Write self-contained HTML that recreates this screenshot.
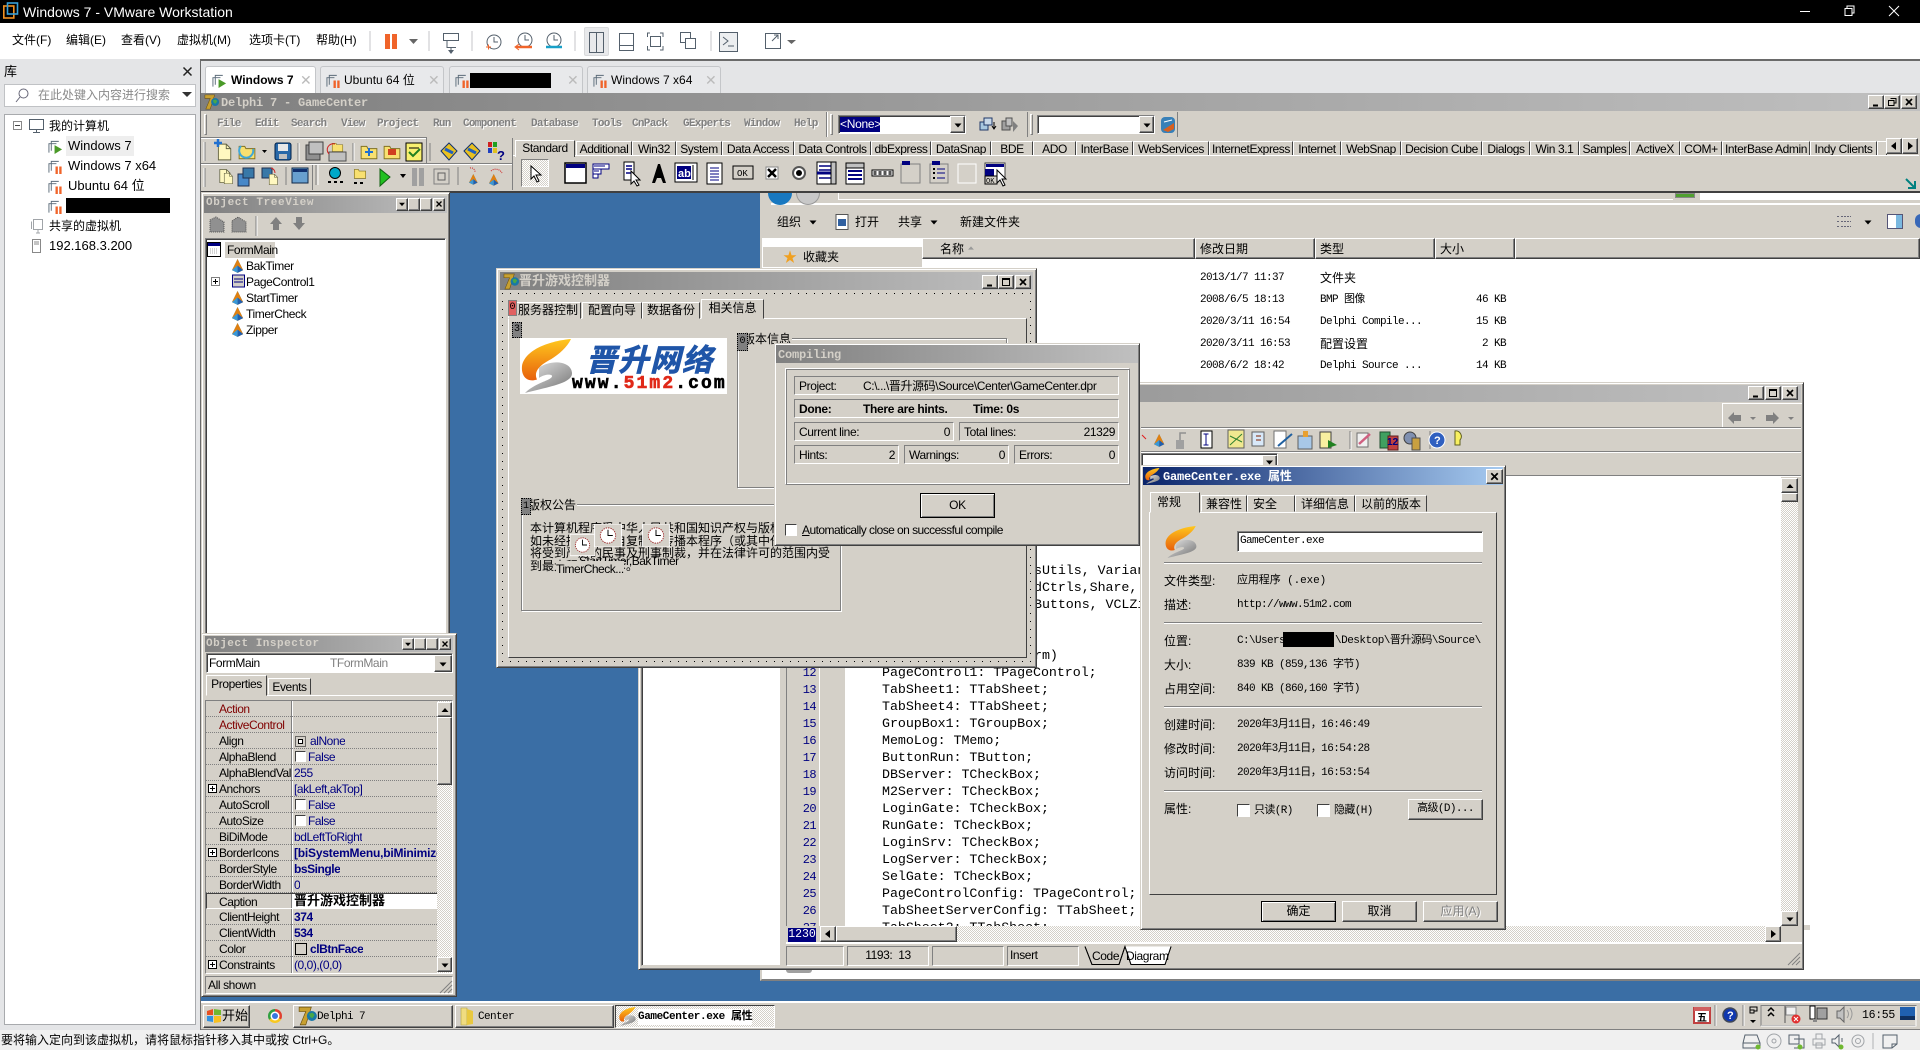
<!DOCTYPE html>
<html lang="zh"><head><meta charset="utf-8"><title>Windows 7 - VMware Workstation</title>
<style>
html,body{margin:0;padding:0}
body{width:1920px;height:1050px;position:relative;overflow:hidden;background:#e4e5e7;font:12px "Liberation Sans","Noto Sans CJK SC",sans-serif;color:#000}
.a{position:absolute;box-sizing:border-box}
.t{position:absolute;white-space:nowrap;line-height:16px;height:16px}
.s{letter-spacing:-.4px}
.m{font-family:"Liberation Mono","Noto Sans CJK SC",monospace;font-size:11px;letter-spacing:-.6px}
.r{position:absolute;box-sizing:border-box;background:#d4d0c8;border:1px solid;border-color:#fff #404040 #404040 #fff;box-shadow:inset -1px -1px #808080}
.k{position:absolute;box-sizing:border-box;background:#fff;border:1px solid;border-color:#808080 #fff #fff #808080;box-shadow:inset 1px 1px #404040}
.l{position:absolute;box-sizing:border-box;background:#d4d0c8;border:1px solid;border-color:#808080 #fff #fff #808080;line-height:16px;white-space:nowrap}
.w{position:absolute;box-sizing:border-box;background:#d4d0c8;border:1px solid;border-color:#d4d0c8 #404040 #404040 #d4d0c8;box-shadow:inset 1px 1px #fff,inset -1px -1px #808080}
.g{position:absolute;box-sizing:border-box;background:linear-gradient(90deg,#808080,#c0c0c0)}
.h{position:absolute;height:2px;background:linear-gradient(#808080 50%,#fff 50%)}
.d{position:absolute;box-sizing:border-box;background:repeating-conic-gradient(#fff 0 25%,#d4d0c8 0 50%) 0 0/2px 2px}
.tb{position:absolute;box-sizing:border-box;background:#d4d0c8;border:1px solid;border-color:#fff #404040 #d4d0c8 #fff;text-align:center;white-space:nowrap;overflow:hidden;line-height:15px;letter-spacing:-.4px}
.mn{position:absolute;white-space:nowrap;line-height:16px;font:bold 11px/16px "Liberation Mono",monospace;letter-spacing:-.7px;color:#808080;text-shadow:1px 1px #fff;top:116px}
.ttl{position:absolute;white-space:nowrap;font:bold 12px/16px "Liberation Mono","Noto Sans CJK SC",monospace;letter-spacing:-.2px;color:#d4d0c8}
.vt{position:absolute;height:27px;top:66px;border:1px solid #c4c6c9;border-bottom:0;border-radius:3px 3px 0 0;background:#e8e9eb;box-sizing:border-box;font-size:12px;line-height:26px;white-space:nowrap}
.cd{position:absolute;left:882px;font:13.33px/17px "Liberation Mono",monospace;white-space:pre;letter-spacing:-.05px;height:17px;margin-top:2px}
.ln{position:absolute;left:790px;width:26px;text-align:right;font:12px/17px "Liberation Mono",monospace;letter-spacing:-.6px;color:#000080;margin-top:2px}
.ir{position:absolute;left:206px;width:231px;height:16px;border-bottom:1px dotted #808080;box-sizing:border-box}
.ir>b,.ir>i{position:absolute;font-style:normal;font-weight:normal;top:1px;line-height:15px;white-space:nowrap;letter-spacing:-.45px}
.ir>b{left:13px}.ir>i{left:88px;color:#000080;max-width:143px;overflow:hidden}
.cb{position:absolute;box-sizing:border-box;width:11px;height:11px;background:#fff;border:1px solid;border-color:#404040 #fff #fff #404040}
svg{position:absolute;overflow:visible}
.lb{position:absolute;left:1164px;line-height:16px;white-space:nowrap;font-size:12px;margin-top:1px}
.vl{position:absolute;left:1237px;line-height:16px;white-space:nowrap;margin-top:1px}
</style></head><body>
<svg width="0" height="0" style="position:absolute"><defs>
<linearGradient id="og" x1="0" y1="0" x2="0" y2="1"><stop offset="0" stop-color="#ffc81e"/><stop offset="1" stop-color="#e8600c"/></linearGradient>
<linearGradient id="gg" x1="0" y1="0" x2="1" y2="1"><stop offset="0" stop-color="#e8e8e8"/><stop offset="1" stop-color="#707070"/></linearGradient>
<symbol id="sl" viewBox="0 0 52 64" preserveAspectRatio="none"><path d="M50 0C30 2 4 12 1 32C0 44 6 52 16 48C12 38 20 30 30 24C38 18 46 10 50 0Z" fill="url(#og)"/><path d="M18 34C30 24 50 26 51 40C52 52 30 56 4 64C12 54 26 50 30 46C34 42 26 40 18 46Z" fill="url(#gg)"/></symbol>
<symbol id="d7" viewBox="0 0 18 18"><path d="M1 1H12L7 17H2L7 5H1Z" fill="#c8a030" stroke="#6a5010" stroke-width=".6"/><circle cx="12.5" cy="9" r="4.5" fill="#1878a8"/><path d="M10 7l3-1 2 2-2 3-2-1z" fill="#48a848"/></symbol>
<symbol id="vm" viewBox="0 0 16 16"><path d="M3.5 12.500V2.500H11.500M1 14.500V5H9" fill="none" stroke="#5a6a78"/><rect x="8" y="8" width="2.500" height="8" fill="#f0642a"/><rect x="12" y="8" width="2.500" height="8" fill="#f0642a"/></symbol>
<symbol id="vr" viewBox="0 0 16 16"><path d="M3.500 12.500V2.500H11.500M1 14.500V5H9" fill="none" stroke="#5a6a78"/><path d="M7 6.500L15 11L7 16Z" fill="#4a9a28"/></symbol>
<symbol id="ck" viewBox="0 0 28 24"><rect width="28" height="24" fill="#d4d0c8" stroke="#fff"/><circle cx="14" cy="12" r="8" fill="#fff" stroke="#a03030" stroke-dasharray="1.500 1"/><path d="M14 6V12H19" fill="none" stroke="#000"/></symbol>
<symbol id="cu" viewBox="0 0 14 16"><path d="M6 1L12 13H0Z" fill="#3898d8" transform="rotate(0)"/><path d="M6 1L12 13L6 16L0 13Z" fill="#e08010"/><path d="M6 16L12 13L6 8Z" fill="#2060b0"/><path d="M0 13L6 16V8Z" fill="#3898d8"/></symbol>
<symbol id="xx" viewBox="0 0 12 12"><path d="M3 3L9 9M9 3L3 9" stroke="#000" stroke-width="1.600"/></symbol>
<symbol id="mi" viewBox="0 0 12 12"><path d="M3 9.500H8" stroke="#000" stroke-width="2"/></symbol>
<symbol id="mx" viewBox="0 0 12 12"><path d="M2.500 2.500H9.500V9.500H2.500Z M2.500 3.500H9.500" fill="none" stroke="#000"/></symbol>
<symbol id="rs" viewBox="0 0 12 12"><path d="M4.500 2.500H10V7H8M2.500 4.500H8V9.500H2.500Z" fill="none" stroke="#000"/></symbol>
<symbol id="dn" viewBox="0 0 12 12"><path d="M2.500 4.500H9.500L6 8.500Z"/></symbol>
<symbol id="up" viewBox="0 0 12 12"><path d="M2.500 8H9.500L6 4Z"/></symbol>
<symbol id="fo" viewBox="0 0 16 16"><path d="M1 3H6L7 5H15V14H1Z" fill="#f8e070" stroke="#807020" stroke-width=".8"/></symbol>
<symbol id="pg" viewBox="0 0 16 16"><path d="M3 1H10L14 5V15H3Z" fill="#fff8c0" stroke="#606040" stroke-width=".8"/><path d="M10 1V5H14" fill="none" stroke="#606040" stroke-width=".8"/></symbol>
<pattern id="dots" width="8" height="8" patternUnits="userSpaceOnUse"><rect x="3" y="3" width="1" height="1" fill="#000"/></pattern>
</defs></svg>

<!-- VMware title -->
<div class="a" style="left:0;top:0;width:1920px;height:23px;background:#000"></div>
<svg style="left:3px;top:2px" width="16" height="18" viewBox="0 0 16 18"><rect x=".8" y="4" width="10" height="12" fill="none" stroke="#f09020" stroke-width="1.600"/><rect x="4.500" y="1" width="10" height="11" fill="none" stroke="#38a0d8" stroke-width="1.600"/></svg>
<div class="t" style="left:23px;top:4px;color:#fff;font-size:14px">Windows 7 - VMware Workstation</div>
<svg style="left:1800px;top:5px" width="110" height="12" viewBox="0 0 110 12" fill="none" stroke="#fff"><path d="M0 6.500H10"/><path d="M45 3.500H52V10.500H45ZM47 3V1H54V8H52"/><path d="M89 1L99 11M99 1L89 11"/></svg>

<!-- VMware menu -->
<div class="a" style="left:0;top:23px;width:1920px;height:36px;background:#fff"></div>
<div class="t" style="left:12px;top:32px;font-size:12px">文件(F)</div>
<div class="t" style="left:66px;top:32px;font-size:12px">编辑(E)</div>
<div class="t" style="left:121px;top:32px;font-size:12px">查看(V)</div>
<div class="t" style="left:177px;top:32px;font-size:12px">虚拟机(M)</div>
<div class="t" style="left:249px;top:32px;font-size:12px">选项卡(T)</div>
<div class="t" style="left:316px;top:32px;font-size:12px">帮助(H)</div>
<div class="a" style="left:584px;top:27px;width:25px;height:29px;background:#e8e9eb;border:1px solid #d8d9db;border-radius:2px"></div>
<svg style="left:0;top:23px" width="860" height="36" viewBox="0 0 860 36" fill="none" stroke="#54606c">
<path d="M370 8V28M429 8V28M472 8V28M575 8V28M711 8V28" stroke="#c4c6c9"/>
<rect x="385" y="11" width="5" height="15" fill="#f0642a" stroke="none"/><rect x="392" y="11" width="5" height="15" fill="#f0642a" stroke="none"/>
<path d="M409 16H418L413.500 21Z" fill="#666" stroke="none"/>
<path d="M443.500 10.500H458.500V17.500H443.500ZM447 17.500V24.500H456M451 24V30" /><path d="M448 27L451 31L454 27" fill="#54606c" stroke="none"/>
<circle cx="494" cy="19" r="7"/><path d="M494 14V19H498"/><path d="M486 24H491M488.500 21.500V26.500" stroke="#f0642a"/>
<circle cx="525" cy="17" r="7"/><path d="M525 12V17H529"/><path d="M516 24H532" stroke="#f0642a" stroke-width="2.500"/><path d="M519 21L515 24L519 27" stroke="#f0642a"/>
<circle cx="554" cy="17" r="7"/><path d="M554 12V17H558"/><path d="M546 24H562" stroke="#18a0c8" stroke-width="2.500"/>
<rect x="589.500" y="9.500" width="14" height="20"/><path d="M596.500 10V29"/>
<rect x="619.500" y="10.500" width="14" height="17"/><path d="M620 22.500H633"/>
<path d="M650 10H647.500V14M660 10H663V14M650 27H647.500V23M660 27H663V23"/><rect x="650.500" y="13.500" width="10" height="10"/>
<rect x="680.500" y="9.500" width="10" height="10"/><rect x="685.500" y="15.500" width="10" height="10" fill="#fff"/>
<rect x="719.500" y="9.500" width="18" height="19" fill="#eceef0"/><path d="M723 14L728 18L723 22M728 23H734"/>
<path d="M765.500 10.500H780.500V25.500H765.500Z"/><path d="M772 18L778 12M778 16V12H774"/>
<path d="M787 17H796L791.500 21Z" fill="#666" stroke="none"/>
</svg>

<!-- library -->
<div class="t" style="left:4px;top:64px;font-size:13px">库</div>
<svg style="left:182px;top:66px" width="11" height="11" viewBox="0 0 11 11"><path d="M1.500 1.500L9.500 9.500M9.500 1.500L1.500 9.500" stroke="#222" stroke-width="1.500"/></svg>
<div class="a" style="left:4px;top:84px;width:192px;height:23px;background:#fff;border:1px solid #c0c2c5"></div>
<svg style="left:15px;top:88px" width="14" height="15" viewBox="0 0 14 15" fill="none" stroke="#667"><circle cx="8.500" cy="5.500" r="4.500"/><path d="M5 9L1 14"/></svg>
<div class="t" style="left:38px;top:87px;color:#8a8a8a">在此处键入内容进行搜索</div>
<svg style="left:182px;top:91px" width="12" height="9" viewBox="0 0 12 9"><path d="M0 1H10L5 6Z" fill="#333"/></svg>
<div class="a" style="left:4px;top:114px;width:192px;height:911px;background:#fff;border:1px solid #a8aaad"></div>
<div class="a" style="left:13px;top:121px;width:9px;height:9px;border:1px solid #888"></div><div class="a" style="left:15px;top:125px;width:5px;height:1px;background:#444"></div>
<svg style="left:29px;top:119px" width="15" height="14" viewBox="0 0 15 14" fill="none" stroke="#54606c"><rect x=".5" y=".5" width="14" height="10"/><path d="M4 13.500H11M7.500 11V13"/></svg>
<div class="t" style="left:49px;top:118px;font-size:12px">我的计算机</div>
<div class="a" style="left:66px;top:136px;width:68px;height:20px;background:#eeeeee"></div>
<svg style="left:48px;top:139px" width="15" height="15"><use href="#vr"/></svg>
<div class="t" style="left:68px;top:138px;font-size:13px">Windows 7</div>
<svg style="left:48px;top:159px" width="15" height="15"><use href="#vm"/></svg>
<div class="t" style="left:68px;top:158px;font-size:13px">Windows 7 x64</div>
<svg style="left:48px;top:179px" width="15" height="15"><use href="#vm"/></svg>
<div class="t" style="left:68px;top:178px;font-size:13px">Ubuntu 64 位</div>
<svg style="left:48px;top:199px" width="15" height="15"><use href="#vm"/></svg>
<div class="a" style="left:66px;top:198px;width:104px;height:15px;background:#000"></div>
<svg style="left:31px;top:219px" width="13" height="15" viewBox="0 0 13 15" fill="none" stroke="#a0a4a8"><rect x="2.500" y=".5" width="9" height="10"/><path d="M.5 2.500V10M5 14H9M7 11V14"/></svg>
<div class="t" style="left:49px;top:218px;font-size:12px">共享的虚拟机</div>
<svg style="left:32px;top:239px" width="10" height="15" viewBox="0 0 10 15" fill="none" stroke="#888"><rect x=".5" y=".5" width="8" height="13"/><path d="M2 3H7M2 5H7"/></svg>
<div class="t" style="left:49px;top:238px;font-size:13px">192.168.3.200</div>

<!-- VM tabs -->
<div class="a" style="left:200px;top:59px;width:1720px;height:2px;background:#6a6a6a"></div>
<div class="a" style="left:200px;top:59px;width:1px;height:971px;background:#6a6a6a"></div>
<div class="vt" style="left:205px;width:111px;background:#fff"><svg style="left:6px;top:6px" width="15" height="15"><use href="#vr"/></svg><b style="position:absolute;left:25px">Windows 7</b><span style="position:absolute;left:94px;color:#bbb;font-size:14px">✕</span></div>
<div class="vt" style="left:320px;width:124px"><svg style="left:5px;top:6px" width="15" height="15"><use href="#vm"/></svg><span style="position:absolute;left:23px">Ubuntu 64 位</span><span style="position:absolute;left:107px;color:#bbb;font-size:14px">✕</span></div>
<div class="vt" style="left:449px;width:134px"><svg style="left:5px;top:6px" width="15" height="15"><use href="#vm"/></svg><div class="a" style="left:20px;top:6px;width:81px;height:15px;background:#000"></div><span style="position:absolute;left:117px;color:#bbb;font-size:14px">✕</span></div>
<div class="vt" style="left:587px;width:134px"><svg style="left:5px;top:6px" width="15" height="15"><use href="#vm"/></svg><span style="position:absolute;left:23px">Windows 7 x64</span><span style="position:absolute;left:117px;color:#bbb;font-size:14px">✕</span></div>

<!-- Guest desktop -->
<div class="a" style="left:201px;top:93px;width:1719px;height:937px;background:#3a6ea5"></div>

<!-- Explorer behind -->
<div class="a" style="left:760px;top:193px;width:1160px;height:788px;background:#fff;border-left:2px solid #d4d0c8;border-bottom:2px solid #808080"></div>
<div class="a" style="left:762px;top:193px;width:1158px;height:45px;background:#d4d0c8"></div>
<div class="a" style="left:771px;top:193px;width:1149px;height:12px;background:#d4d0c8;border-bottom:2px solid #fff"></div>
<div class="a" style="left:838px;top:193px;width:835px;height:7px;border-bottom:1px solid #fff;border-left:1px solid #fff"></div>
<div class="a" style="left:1700px;top:193px;width:220px;height:7px;background:#fff"></div>
<div class="a" style="left:1675px;top:193px;width:20px;height:5px;background:#50a030;border:1px solid #888"></div>
<div class="a" style="left:768px;top:193px;width:24px;height:12px;background:#1878c0;border-radius:0 0 12px 12px"></div>
<div class="a" style="left:796px;top:193px;width:24px;height:12px;background:#c8c8c8;border-radius:0 0 12px 12px;border:1px solid #999;border-top:0"></div>
<div class="t" style="left:777px;top:214px">组织</div>
<svg style="left:807px;top:216px" width="12" height="12"><use href="#dn"/></svg>
<svg style="left:835px;top:214px" width="15" height="16" viewBox="0 0 15 16"><rect x="1" y=".5" width="12" height="15" fill="#fff" stroke="#555"/><rect x="3" y="5" width="8" height="7" fill="#3060a0"/></svg>
<div class="t" style="left:855px;top:214px">打开</div>
<div class="t" style="left:898px;top:214px">共享</div>
<svg style="left:928px;top:216px" width="12" height="12"><use href="#dn"/></svg>
<div class="t" style="left:960px;top:214px">新建文件夹</div>
<svg style="left:1836px;top:215px" width="16" height="13" viewBox="0 0 16 13" fill="none" stroke="#667"><path d="M1 1.500H3M1 6.500H3M1 11.500H3M5 1.500H15M5 6.500H15M5 11.500H15" stroke-dasharray="2 1"/></svg>
<svg style="left:1862px;top:216px" width="12" height="12"><use href="#dn"/></svg>
<svg style="left:1887px;top:214px" width="16" height="15" viewBox="0 0 16 15"><rect x=".5" y=".5" width="15" height="14" fill="#fff" stroke="#557"/><rect x="9" y="1" width="6" height="13" fill="#7ab8e0"/></svg>
<div class="a" style="left:1915px;top:214px;width:12px;height:14px;border-radius:7px;background:#3868b8"></div>
<div class="a" style="left:763px;top:247px;width:159px;height:20px;background:#d4d0c8"></div>
<div class="t" style="left:783px;top:249px;font-size:14px;color:#f0a020;line-height:16px">★</div>
<div class="t" style="left:803px;top:249px">收藏夹</div>
<div class="r" style="left:922px;top:238px;width:273px;height:21px;box-shadow:inset -1px -1px #808080"></div>
<div class="t" style="left:940px;top:241px">名称</div><svg style="left:966px;top:243px" width="10" height="10"><use href="#up" fill="#999"/></svg>
<div class="r" style="left:1195px;top:238px;width:120px;height:21px"></div><div class="t" style="left:1200px;top:241px">修改日期</div>
<div class="r" style="left:1315px;top:238px;width:120px;height:21px"></div><div class="t" style="left:1320px;top:241px">类型</div>
<div class="r" style="left:1435px;top:238px;width:80px;height:21px"></div><div class="t" style="left:1440px;top:241px">大小</div>
<div class="r" style="left:1515px;top:238px;width:405px;height:21px"></div>
<div class="t m" style="left:1200px;top:270px">2013/1/7 11:37</div><div class="t" style="left:1320px;top:270px">文件夹</div>
<div class="t m" style="left:1200px;top:292px">2008/6/5 18:13</div><div class="t m" style="left:1320px;top:292px">BMP 图像</div><div class="t m" style="left:1476px;top:292px">46 KB</div>
<div class="t m" style="left:1200px;top:314px">2020/3/11 16:54</div><div class="t m" style="left:1320px;top:314px">Delphi Compile...</div><div class="t m" style="left:1476px;top:314px">15 KB</div>
<div class="t m" style="left:1200px;top:336px">2020/3/11 16:53</div><div class="t" style="left:1320px;top:336px">配置设置</div><div class="t m" style="left:1482px;top:336px">2 KB</div>
<div class="t m" style="left:1200px;top:358px">2008/6/2 18:42</div><div class="t m" style="left:1320px;top:358px">Delphi Source ...</div><div class="t m" style="left:1476px;top:358px">14 KB</div>
<div class="a" style="left:786px;top:970px;width:26px;height:3px;background:#a0a0a0;border-radius:0 0 6px 6px"></div>
<div class="a" style="left:1804px;top:925px;width:6px;height:5px;background:#d4d0c8"></div>

<!-- Editor window -->
<div class="w" style="left:638px;top:382px;width:1166px;height:588px"></div>
<div class="g" style="left:641px;top:385px;width:1160px;height:17px"></div>
<div class="r" style="left:1748px;top:386px;width:16px;height:14px"><svg width="14" height="12"><use href="#mi"/></svg></div>
<div class="r" style="left:1765px;top:386px;width:16px;height:14px"><svg width="14" height="12"><use href="#mx"/></svg></div>
<div class="r" style="left:1782px;top:386px;width:16px;height:14px"><svg width="14" height="12"><use href="#xx"/></svg></div>
<div class="a" style="left:1722px;top:403px;width:80px;height:24px;border-top:1px solid #fff;border-left:1px solid #fff"></div>
<svg style="left:1728px;top:410px" width="70" height="16" viewBox="0 0 70 16"><path d="M0 8L6 2V5H13V11H6V14Z" fill="#808080"/><path d="M22 7H28L25 10Z" fill="#808080"/><path d="M51 8L45 2V5H38V11H45V14Z" fill="#808080" transform="translate(0 0)"/><path d="M60 7H66L63 10Z" fill="#808080"/></svg>
<div class="h" style="left:1141px;top:427px;width:660px"></div>
<div class="h" style="left:1141px;top:451px;width:660px"></div>
<svg style="left:1140px;top:428px" width="320" height="24" viewBox="0 0 320 24">
<use href="#cu" x="14" y="4" width="12" height="16"/>
<path d="M2 7L6 11" stroke="#e02020"/>
<rect x="36" y="12" width="8" height="9" fill="#a0a0a0"/><path d="M40 12V5H46" fill="none" stroke="#909090" stroke-width="1.500"/>
<path d="M61 3H72V20H61Z" fill="#fff" stroke="#000"/><path d="M66 6V17M63.500 6H68.500M63.500 17H68.500" stroke="#000080"/>
<path d="M88 2H104V20H88Z" fill="#f0e890" stroke="#606060"/><path d="M90 8L102 14M102 6L90 17" stroke="#308030"/>
<path d="M112 4H124V18H112Z" fill="#d8e8f8" stroke="#606060"/><path d="M116 8H121M116 12H121" stroke="#802000"/>
<path d="M134 3H146V20H134Z" fill="#fff" stroke="#707070"/><path d="M138 18L152 6" stroke="#2060a0" stroke-width="2"/>
<rect x="158" y="8" width="14" height="13" fill="#a8c8e8" stroke="#606060"/><rect x="163" y="3" width="5" height="6" fill="#e8a030"/>
<path d="M180 4H191V20H180Z" fill="#f8f0a0" stroke="#404040"/><path d="M188 12L197 17L188 20Z" fill="#208020"/>
<path d="M210 3V21" stroke="#808080"/><path d="M211 4V22" stroke="#fff"/>
<path d="M217 5H228V19H217Z" fill="#f0f0f0" stroke="#707070"/><path d="M219 16L230 6" stroke="#d06080" stroke-width="2.500"/>
<path d="M240 4H250V20H240Z" fill="#40a060" stroke="#205030"/><path d="M248 8H258V22H248Z" fill="#c04040" stroke="#602020"/><text x="247" y="17" font-size="10" font-weight="bold" fill="#000080" font-family="Liberation Sans">12</text>
<circle cx="270" cy="10" r="6" fill="#8090b0" stroke="#404040"/><path d="M272 10H280V22H272Z" fill="#c8a040" stroke="#505050"/>
<path d="M290 3V21" stroke="#808080"/>
<circle cx="297" cy="12" r="8" fill="#3060c0" stroke="#fff"/><text x="294" y="16" font-size="11" font-weight="bold" fill="#fff" font-family="Liberation Sans">?</text>
<path d="M315 3a5.500 5.500 0 0 1 5 9v5h-5z" fill="#f8f060" stroke="#606020"/>
</svg>
<div class="k" style="left:1141px;top:453px;width:137px;height:20px"></div><div class="r" style="left:1262px;top:455px;width:15px;height:16px"><svg width="13" height="12"><use href="#dn"/></svg></div>
<div class="h" style="left:1141px;top:475px;width:660px"></div>
<div class="a" style="left:1141px;top:476px;width:640px;height:450px;background:#fff"></div>
<div class="a" style="left:847px;top:476px;width:933px;height:450px;background:#fff"></div>
<div class="a" style="left:641px;top:405px;width:140px;height:561px;background:#fff;border:1px solid;border-color:#808080 #d4d0c8 #d4d0c8 #808080;box-shadow:inset 1px 1px #404040"></div>
<div class="a" style="left:786px;top:476px;width:33px;height:469px;background:#d4d0c8;border-left:1px solid #808080"></div>
<div class="a" style="left:819px;top:476px;width:28px;height:469px;background:#d4d0c8;border-left:1px solid #fff;border-right:2px solid #fff"></div>
<div class="cd" style="left:1034px;top:561px">sUtils, Variants, Classes</div>
<div class="cd" style="left:1034px;top:578px">dCtrls,Share, ExtCtrls</div>
<div class="cd" style="left:1034px;top:595px">Buttons, VCLZip, </div>
<div class="cd" style="left:1034px;top:646px">rm)</div>
<div class="cd" style="top:663px">PageControl1: TPageControl;</div><div class="ln" style="top:663px">12</div>
<div class="cd" style="top:680px">TabSheet1: TTabSheet;</div><div class="ln" style="top:680px">13</div>
<div class="cd" style="top:697px">TabSheet4: TTabSheet;</div><div class="ln" style="top:697px">14</div>
<div class="cd" style="top:714px">GroupBox1: TGroupBox;</div><div class="ln" style="top:714px">15</div>
<div class="cd" style="top:731px">MemoLog: TMemo;</div><div class="ln" style="top:731px">16</div>
<div class="cd" style="top:748px">ButtonRun: TButton;</div><div class="ln" style="top:748px">17</div>
<div class="cd" style="top:765px">DBServer: TCheckBox;</div><div class="ln" style="top:765px">18</div>
<div class="cd" style="top:782px">M2Server: TCheckBox;</div><div class="ln" style="top:782px">19</div>
<div class="cd" style="top:799px">LoginGate: TCheckBox;</div><div class="ln" style="top:799px">20</div>
<div class="cd" style="top:816px">RunGate: TCheckBox;</div><div class="ln" style="top:816px">21</div>
<div class="cd" style="top:833px">LoginSrv: TCheckBox;</div><div class="ln" style="top:833px">22</div>
<div class="cd" style="top:850px">LogServer: TCheckBox;</div><div class="ln" style="top:850px">23</div>
<div class="cd" style="top:867px">SelGate: TCheckBox;</div><div class="ln" style="top:867px">24</div>
<div class="cd" style="top:884px">PageControlConfig: TPageControl;</div><div class="ln" style="top:884px">25</div>
<div class="cd" style="top:901px">TabSheetServerConfig: TTabSheet;</div><div class="ln" style="top:901px">26</div>
<div class="cd" style="top:918px">TabSheet2: TTabSheet;</div><div class="ln" style="top:918px">27</div>
<!-- editor scrollbars -->
<div class="d" style="left:1781px;top:478px;width:17px;height:448px"></div>
<div class="r" style="left:1781px;top:478px;width:17px;height:15px"><svg style="left:2px;top:1px" width="12" height="12"><use href="#up"/></svg></div>
<div class="r" style="left:1781px;top:493px;width:17px;height:9px"></div>
<div class="r" style="left:1781px;top:911px;width:17px;height:15px"><svg style="left:2px;top:1px" width="12" height="12"><use href="#dn"/></svg></div>
<div class="a" style="left:786px;top:926px;width:61px;height:19px;background:#d4d0c8"></div>
<div class="a" style="left:788px;top:928px;width:28px;height:14px;background:#000080;color:#fff;font:11.500px/14px 'Liberation Mono',monospace;letter-spacing:0;text-align:center;overflow:hidden">1230</div>
<div class="d" style="left:820px;top:926px;width:961px;height:16px"></div>
<div class="r" style="left:820px;top:926px;width:16px;height:16px"><svg style="left:1px;top:1px" width="12" height="12"><path d="M8 2V10L3 6Z"/></svg></div>
<div class="r" style="left:836px;top:926px;width:121px;height:16px"></div>
<div class="r" style="left:1765px;top:926px;width:16px;height:16px"><svg style="left:1px;top:1px" width="12" height="12"><path d="M4 2V10L9 6Z"/></svg></div>
<div class="a" style="left:786px;top:942px;width:1016px;height:26px;background:#d4d0c8;border-top:2px solid #fff"></div>
<div class="l" style="left:786px;top:946px;width:58px;height:20px"></div>
<div class="l s" style="left:847px;top:946px;width:82px;height:20px;text-align:center">1193:&nbsp; 13</div>
<div class="l" style="left:932px;top:946px;width:72px;height:20px"></div>
<div class="l s" style="left:1007px;top:946px;width:72px;height:20px;padding-left:2px">Insert</div>
<svg style="left:1085px;top:946px" width="90" height="20" viewBox="0 0 90 20"><path d="M0 .5L7 18.500H34L40 .5M40 .5L46 18.500H80L86 .5" fill="none" stroke="#000"/><path d="M40 .5L46 18.500H80L86 .5Z" fill="#fff"/><path d="M0 .5L7 18.500H34L40 .5L46 18.500H80L86 .5" fill="none" stroke="#000"/></svg>
<div class="t s" style="left:1092px;top:948px">Code</div>
<div class="t s" style="left:1126px;top:948px">Diagram</div>
<svg style="left:1787px;top:952px" width="13" height="13" viewBox="0 0 13 13"><path d="M13 1L1 13M13 5L5 13M13 9L9 13" stroke="#808080"/></svg>

<!-- Delphi main -->
<div class="g" style="left:201px;top:93px;width:1719px;height:18px"></div>
<svg style="left:204px;top:94px" width="16" height="16"><use href="#d7"/></svg>
<div class="ttl" style="left:221px;top:95px">Delphi 7 - GameCenter</div>
<div class="r" style="left:1868px;top:95px;width:16px;height:14px"><svg width="14" height="12"><use href="#mi"/></svg></div>
<div class="r" style="left:1884px;top:95px;width:16px;height:14px"><svg width="14" height="12"><use href="#rs"/></svg></div>
<div class="r" style="left:1901px;top:95px;width:16px;height:14px"><svg width="14" height="12"><use href="#xx"/></svg></div>
<div class="a" style="left:201px;top:111px;width:1719px;height:82px;background:#d4d0c8;border-bottom:2px solid #404040"></div>
<div class="a" style="left:204px;top:114px;width:3px;height:21px;border:1px solid;border-color:#fff #808080 #808080 #fff"></div>
<div class="mn" style="left:217px">File</div><div class="mn" style="left:255px">Edit</div><div class="mn" style="left:291px">Search</div><div class="mn" style="left:341px">View</div><div class="mn" style="left:377px">Project</div><div class="mn" style="left:433px">Run</div><div class="mn" style="left:463px">Component</div><div class="mn" style="left:531px">Database</div><div class="mn" style="left:592px">Tools</div><div class="mn" style="left:632px">CnPack</div><div class="mn" style="left:683px">GExperts</div><div class="mn" style="left:744px">Window</div><div class="mn" style="left:794px">Help</div>
<div class="a" style="left:826px;top:112px;width:1px;height:25px;background:#808080"></div><div class="a" style="left:827px;top:112px;width:1px;height:25px;background:#fff"></div>
<div class="a" style="left:830px;top:114px;width:3px;height:21px;border:1px solid;border-color:#fff #808080 #808080 #fff"></div>
<div class="k" style="left:838px;top:115px;width:128px;height:19px"></div>
<div class="a" style="left:840px;top:117px;width:40px;height:15px;background:#000080;color:#fff;line-height:15px;text-align:center;font-size:12px;letter-spacing:-.3px">&lt;None&gt;</div>
<div class="r" style="left:950px;top:116px;width:15px;height:17px"><svg style="left:1px;top:2px" width="12" height="12"><use href="#dn"/></svg></div>
<svg style="left:978px;top:116px" width="44" height="18" viewBox="0 0 44 18"><path d="M2 6H10V14H2Z" fill="#a8c8e0" stroke="#203868"/><path d="M6 2H14V9H6Z" fill="#c8d8e8" stroke="#203868"/><path d="M16 6V12M14 10L16 13L18 10" stroke="#000" fill="none"/><path d="M24 5H32V14H24Z" fill="#a0a0a0" stroke="#505050"/><path d="M28 2H34V10H28Z" fill="#c0c0c0" stroke="#505050"/><path d="M35 5L40 10L35 16Z" fill="#808080"/></svg>
<div class="a" style="left:1027px;top:112px;width:1px;height:25px;background:#808080"></div>
<div class="a" style="left:1030px;top:114px;width:3px;height:21px;border:1px solid;border-color:#fff #808080 #808080 #fff"></div>
<div class="k" style="left:1037px;top:115px;width:118px;height:19px"></div>
<div class="r" style="left:1139px;top:116px;width:15px;height:17px"><svg style="left:1px;top:2px" width="12" height="12"><use href="#dn"/></svg></div>
<svg style="left:1160px;top:116px" width="16" height="18" viewBox="0 0 16 18"><rect x="1" y="1" width="14" height="16" rx="4" fill="#3880b8"/><path d="M3 14L14 7V13L8 16Z" fill="#d86020"/><path d="M4 6L12 4" stroke="#fff"/></svg>
<div class="a" style="left:1177px;top:112px;width:1px;height:25px;background:#808080"></div>
<!-- toolbars -->
<div class="a" style="left:201px;top:137px;width:226px;height:1px;background:#808080"></div>
<div class="a" style="left:201px;top:138px;width:226px;height:1px;background:#fff"></div>
<div class="a" style="left:426px;top:138px;width:1px;height:25px;background:#808080"></div>
<div class="a" style="left:201px;top:163px;width:312px;height:1px;background:#808080"></div>
<div class="a" style="left:201px;top:164px;width:312px;height:1px;background:#fff"></div>
<div class="a" style="left:312px;top:165px;width:1px;height:25px;background:#808080"></div>
<div class="a" style="left:512px;top:138px;width:1px;height:52px;background:#808080"></div>
<svg style="left:201px;top:138px" width="312" height="52" viewBox="0 0 312 52">
<path d="M4 4V23M4 30V49" stroke="#808080"/><path d="M3 4V23M3 30V49" stroke="#fff"/>
<use href="#pg" x="14" y="5" width="18" height="18"/><path d="M13 5H21M17 1V9" stroke="#2070d0" stroke-width="2.500"/>
<use href="#fo" x="37" y="5" width="18" height="18"/><path d="M40 8a7 7 0 1 0 12 3" fill="none" stroke="#40a8d8" stroke-width="2"/>
<path d="M61 12H66L63.500 15Z"/>
<rect x="74" y="5" width="16" height="17" rx="2" fill="#2868a8" stroke="#002048"/><rect x="77" y="6" width="10" height="7" fill="#e8e8e8"/><rect x="78" y="16" width="8" height="5" fill="#c0c0c0"/>
<path d="M97 5V23" stroke="#808080"/><path d="M98 5V23" stroke="#fff"/>
<rect x="105" y="7" width="14" height="15" fill="#909090" stroke="#404040"/><rect x="108" y="4" width="14" height="12" fill="#c0c0c0" stroke="#404040"/>
<use href="#fo" x="128" y="3" width="17" height="12"/><rect x="128" y="14" width="17" height="9" fill="#c0c0c0" stroke="#505050"/><path d="M128 16a6 6 0 0 1 6-10" stroke="#d02020" fill="none"/>
<path d="M152 5V23" stroke="#808080"/><path d="M153 5V23" stroke="#fff"/>
<use href="#fo" x="159" y="5" width="18" height="18"/><path d="M164 14H172M168 10V18" stroke="#2070d0" stroke-width="2"/>
<use href="#fo" x="182" y="5" width="18" height="18"/><rect x="187" y="11" width="8" height="6" fill="#d04020"/>
<rect x="205" y="5" width="16" height="18" fill="#f8f070" stroke="#000"/><path d="M208 10H218" stroke="#000"/><path d="M208 14L212 18L219 11" fill="none" stroke="#208020" stroke-width="2"/>
<path d="M229 5V23" stroke="#808080"/>
<path d="M240 13L248 5L256 13L248 22Z" fill="#e8c020" stroke="#103070"/><path d="M244 11L252 15" stroke="#2060c0" stroke-width="3"/>
<path d="M263 13L271 5L279 13L271 22Z" fill="#e8c020" stroke="#103070"/><path d="M267 11L275 15" stroke="#2060c0" stroke-width="3"/>
<rect x="287" y="4" width="4" height="5" fill="#d02020"/><rect x="292" y="4" width="4" height="5" fill="#20a020"/><rect x="287" y="10" width="4" height="5" fill="#2040c0"/><rect x="292" y="10" width="4" height="5" fill="#e0c020"/><text x="296" y="22" font-size="13" font-weight="bold" fill="#000080" font-family="Liberation Sans">?</text>
<use href="#pg" x="16" y="29" width="15" height="18"/><use href="#pg" x="21" y="33" width="12" height="15"/>
<rect x="37" y="36" width="11" height="12" fill="#4888c8" stroke="#203050"/><rect x="42" y="30" width="11" height="10" fill="#3878a8" stroke="#203050"/>
<rect x="61" y="30" width="10" height="10" fill="#3878a8" stroke="#203050"/><use href="#pg" x="66" y="34" width="12" height="15"/><path d="M70 30a5 5 0 0 1 4 5" stroke="#d02020" fill="none"/>
<path d="M85 29V47" stroke="#808080"/>
<rect x="91" y="30" width="16" height="15" fill="#68a0d0" stroke="#102848"/><rect x="92" y="31" width="14" height="3" fill="#103070"/>
<path d="M115 27V47" stroke="#808080"/><path d="M117 27V47" stroke="#fff"/>
<circle cx="134" cy="35" r="5.500" fill="#00a8c8" stroke="#000"/><path d="M127 44h3M133 44h3M139 44h3" stroke="#000" stroke-width="2"/>
<use href="#fo" x="152" y="29" width="14" height="13"/><path d="M153 45h3M159 45h3" stroke="#000" stroke-width="2"/>
<path d="M179 31L189 39L179 48Z" fill="#20c020" stroke="#106010"/>
<path d="M199 36H205L202 40Z"/>
<rect x="211" y="30" width="5" height="18" fill="#a0a0a0"/><rect x="218" y="30" width="5" height="18" fill="#a0a0a0"/>
<rect x="233" y="31" width="15" height="15" fill="#d4d0c8" stroke="#808080"/><rect x="237" y="35" width="7" height="7" fill="none" stroke="#606060"/>
<path d="M257 29V47" stroke="#808080"/>
<use href="#cu" x="268" y="34" width="10" height="14"/><path d="M269 30a4 4 0 0 1 5 4" stroke="#d02020" stroke-dasharray="1 1" fill="none"/>
<use href="#cu" x="288" y="35" width="11" height="13"/><path d="M290 33a7 7 0 0 1 11 2" stroke="#d02020" stroke-dasharray="1 1" fill="none"/>
</svg>
<!-- palette tabs -->
<div class="tb" style="left:576px;top:141px;width:56px;height:15px">Additional</div>
<div class="tb" style="left:632px;top:141px;width:44px;height:15px">Win32</div>
<div class="tb" style="left:676px;top:141px;width:46px;height:15px">System</div>
<div class="tb" style="left:722px;top:141px;width:72px;height:15px">Data Access</div>
<div class="tb" style="left:794px;top:141px;width:77px;height:15px">Data Controls</div>
<div class="tb" style="left:871px;top:141px;width:60px;height:15px">dbExpress</div>
<div class="tb" style="left:931px;top:141px;width:60px;height:15px">DataSnap</div>
<div class="tb" style="left:991px;top:141px;width:42px;height:15px">BDE</div>
<div class="tb" style="left:1033px;top:141px;width:43px;height:15px">ADO</div>
<div class="tb" style="left:1076px;top:141px;width:57px;height:15px">InterBase</div>
<div class="tb" style="left:1133px;top:141px;width:76px;height:15px">WebServices</div>
<div class="tb" style="left:1209px;top:141px;width:84px;height:15px">InternetExpress</div>
<div class="tb" style="left:1293px;top:141px;width:48px;height:15px">Internet</div>
<div class="tb" style="left:1341px;top:141px;width:60px;height:15px">WebSnap</div>
<div class="tb" style="left:1401px;top:141px;width:81px;height:15px">Decision Cube</div>
<div class="tb" style="left:1482px;top:141px;width:48px;height:15px">Dialogs</div>
<div class="tb" style="left:1530px;top:141px;width:49px;height:15px">Win 3.1</div>
<div class="tb" style="left:1579px;top:141px;width:51px;height:15px">Samples</div>
<div class="tb" style="left:1630px;top:141px;width:50px;height:15px">ActiveX</div>
<div class="tb" style="left:1680px;top:141px;width:42px;height:15px">COM+</div>
<div class="tb" style="left:1722px;top:141px;width:88px;height:15px">InterBase Admin</div>
<div class="tb" style="left:1810px;top:141px;width:67px;height:15px">Indy Clients</div>
<div class="tb" style="left:1877px;top:141px;width:10px;height:15px"></div>
<div class="r" style="left:1886px;top:138px;width:16px;height:16px"><svg style="left:1px;top:1px" width="12" height="12"><path d="M8 2V10L3 6Z"/></svg></div>
<div class="r" style="left:1902px;top:138px;width:16px;height:16px"><svg style="left:1px;top:1px" width="12" height="12"><path d="M4 2V10L9 6Z"/></svg></div>
<div class="a" style="left:513px;top:155px;width:1406px;height:1px;background:#fff"></div>
<div class="tb" style="left:515px;top:140px;width:60px;height:17px;border-bottom:0;z-index:2">Standard</div>
<div class="d" style="left:521px;top:159px;width:28px;height:28px;border:1px solid;border-color:#808080 #fff #fff #808080"></div>
<svg style="left:530px;top:165px" width="14" height="18" viewBox="0 0 14 18"><path d="M1 1V14L4 11L7 17L9 16L6 10H11Z" fill="#fff" stroke="#000"/></svg>
<svg style="left:555px;top:158px" width="1000" height="32" viewBox="0 0 1000 32">
<rect x="10" y="5" width="21" height="20" fill="#fff" stroke="#000" stroke-width="1.500"/><rect x="11" y="6" width="19" height="4" fill="#000080"/>
<path d="M38 6H54V11H38ZM38 11H46V16H38ZM38 16H43V20H38Z" fill="#fff" stroke="#000080"/><path d="M39 8H50M39 13H44" stroke="#000080"/>
<rect x="69" y="4" width="10" height="18" fill="#fff" stroke="#000"/><path d="M71 8H77M71 11H77M71 15H77" stroke="#000080" stroke-width="1.500"/><path d="M76 13V26L79 23L82 28L84 27L81 22H85Z" fill="#fff" stroke="#000"/>
<path d="M97 25L103 6H105L111 25H108L106 20H102L100 25Z" fill="#000"/>
<rect x="120" y="5" width="22" height="19" fill="#fff" stroke="#000"/><rect x="122" y="8" width="14" height="13" fill="#000080"/><text x="123" y="19" font-size="11" font-weight="bold" fill="#fff" font-family="Liberation Sans">ab</text><path d="M138 7V22" stroke="#000"/>
<rect x="152" y="5" width="15" height="21" fill="#fff" stroke="#000"/><path d="M155 10H164M155 13H164M155 16H164M155 19H164M155 22H164" stroke="#000080"/>
<rect x="178" y="8" width="20" height="13" fill="#d4d0c8" stroke="#000"/><text x="182" y="18" font-size="9" font-family="Liberation Mono">OK</text>
<rect x="211" y="9" width="12" height="12" fill="#fff" stroke="#888"/><path d="M213 11L221 19M221 11L213 19" stroke="#000" stroke-width="2.500"/>
<circle cx="244" cy="15" r="6" fill="#fff" stroke="#555" stroke-width="2"/><circle cx="244" cy="15" r="3"/>
<rect x="262" y="4" width="19" height="22" fill="#fff" stroke="#000"/><path d="M264 8H276M264 12H276M264 20H276" stroke="#000080" stroke-width="1.500"/><path d="M262 15H277" stroke="#000080" stroke-width="3"/><rect x="276" y="4" width="5" height="22" fill="#c0c0c0" stroke="#000"/>
<rect x="291" y="5" width="18" height="21" fill="#fff" stroke="#000"/><rect x="291" y="5" width="18" height="5" fill="#c0c0c0" stroke="#000"/><path d="M293 13H307M293 17H307M293 21H307" stroke="#000080" stroke-width="2"/>
<rect x="317" y="12" width="21" height="6" fill="#fff" stroke="#000"/><path d="M320 13V17M325 13V17M330 13V17M335 13V17" stroke="#555" stroke-width="3"/>
<rect x="346" y="6" width="19" height="19" fill="#d4d0c8" stroke="#808080"/><rect x="347" y="3" width="8" height="4" fill="#000080"/>
<rect x="375" y="6" width="18" height="19" fill="#d4d0c8" stroke="#808080"/><rect x="377" y="3" width="8" height="4" fill="#000080"/><path d="M378 11H380M378 15H380M378 20H380" stroke="#000" stroke-width="2"/><path d="M382 11H390M382 15H390M382 20H390" stroke="#000080"/>
<rect x="403" y="6" width="18" height="19" fill="#d4d0c8" stroke="#fff"/>
<rect x="430" y="5" width="20" height="16" fill="#fff" stroke="#404040"/><rect x="431" y="6" width="18" height="3" fill="#000080"/><rect x="430" y="11" width="9" height="7" fill="#000080"/><rect x="430" y="18" width="12" height="8" fill="#d4d0c8" stroke="#000"/><text x="431" y="25" font-size="7" font-family="Liberation Mono">OK</text><path d="M442 12V25L445 22L448 28L450 27L447 21H451Z" fill="#fff" stroke="#000"/>
</svg>
<svg style="left:1905px;top:178px" width="11" height="11" viewBox="0 0 11 11"><path d="M1 1L9 9M10 3V10H3" fill="none" stroke="#008080" stroke-width="2"/></svg>

<!-- Object TreeView -->
<div class="w" style="left:201px;top:192px;width:249px;height:444px"></div>
<div class="g" style="left:204px;top:196px;width:243px;height:17px"></div>
<div class="ttl" style="left:206px;top:195px;letter-spacing:.6px;font-size:11px">Object TreeView</div>
<div class="r" style="left:396px;top:198px;width:12px;height:13px"><svg style="left:0;top:0" width="10" height="10"><use href="#dn"/></svg></div>
<div class="r" style="left:408px;top:198px;width:12px;height:13px"></div>
<div class="r" style="left:420px;top:198px;width:12px;height:13px"></div>
<div class="r" style="left:433px;top:198px;width:12px;height:13px"><svg style="left:0;top:0" width="10" height="10"><use href="#xx"/></svg></div>
<svg style="left:204px;top:214px" width="240" height="24" viewBox="0 0 240 24">
<path d="M6 6L12 3L20 8V18H6Z" fill="#909090" stroke="#505050" stroke-dasharray="1 1"/><path d="M28 7L34 3L42 8V18H28Z" fill="#909090" stroke="#505050" stroke-dasharray="1 1"/>
<path d="M52 2V22" stroke="#808080"/><path d="M53 2V22" stroke="#fff"/>
<path d="M66 10L72 3L78 10H75V16H69V10Z" fill="#808080"/><path d="M89 9H92V3H98V9H101L95 16Z" fill="#808080"/>
</svg>
<div class="k" style="left:205px;top:238px;width:241px;height:396px"></div>
<div class="a" style="left:225px;top:242px;width:50px;height:16px;background:#d4d0c8"></div>
<svg style="left:207px;top:242px" width="15" height="16" viewBox="0 0 15 16"><rect x=".5" y=".5" width="13" height="14" fill="#fff" stroke="#000"/><rect x="1" y="1" width="12" height="3" fill="#000080"/><path d="M3 7H11M3 9H11M3 11H11" stroke="#aaa" stroke-dasharray="1 1"/></svg>
<div class="t s" style="left:227px;top:242px">FormMain</div>
<svg style="left:232px;top:258px" width="13" height="15"><use href="#cu"/></svg><div class="t s" style="left:246px;top:258px">BakTimer</div>
<svg style="left:232px;top:274px" width="13" height="15" viewBox="0 0 13 15"><rect x=".5" y="1" width="12" height="12" fill="#d4d0c8" stroke="#000080"/><path d="M2 5H11M2 8H11" stroke="#000080"/></svg>
<div class="a" style="left:211px;top:277px;width:9px;height:9px;background:#fff;border:1px solid #808080"></div><div class="a" style="left:213px;top:281px;width:5px;height:1px;background:#000"></div><div class="a" style="left:215px;top:279px;width:1px;height:5px;background:#000"></div>
<div class="t s" style="left:246px;top:274px">PageControl1</div>
<svg style="left:232px;top:290px" width="13" height="15"><use href="#cu"/></svg><div class="t s" style="left:246px;top:290px">StartTimer</div>
<svg style="left:232px;top:306px" width="13" height="15"><use href="#cu"/></svg><div class="t s" style="left:246px;top:306px">TimerCheck</div>
<svg style="left:232px;top:322px" width="13" height="15"><use href="#cu"/></svg><div class="t s" style="left:246px;top:322px">Zipper</div>

<!-- Object Inspector -->
<div class="w" style="left:201px;top:633px;width:256px;height:364px"></div>
<div class="g" style="left:205px;top:636px;width:248px;height:16px"></div>
<div class="ttl" style="left:206px;top:636px;letter-spacing:.5px;font-size:11px">Object Inspector</div>
<div class="r" style="left:402px;top:638px;width:12px;height:12px"><svg width="10" height="10"><use href="#dn"/></svg></div>
<div class="r" style="left:414px;top:638px;width:12px;height:12px"></div>
<div class="r" style="left:426px;top:638px;width:12px;height:12px"></div>
<div class="r" style="left:439px;top:638px;width:12px;height:12px"><svg width="10" height="10"><use href="#xx"/></svg></div>
<div class="k" style="left:206px;top:653px;width:247px;height:20px"></div>
<div class="t s" style="left:209px;top:655px">FormMain</div>
<div class="t s" style="left:330px;top:655px;color:#808080">TFormMain</div>
<div class="r" style="left:434px;top:655px;width:18px;height:17px"><svg style="left:2px;top:2px" width="12" height="12"><use href="#dn"/></svg></div>
<div class="a" style="left:206px;top:695px;width:247px;height:1px;background:#fff"></div>
<div class="tb" style="left:206px;top:675px;width:61px;height:21px;border-right:1px solid #404040;z-index:1;line-height:17px">Properties</div>
<div class="tb" style="left:268px;top:678px;width:43px;height:17px;line-height:16px">Events</div>
<div class="a" style="left:205px;top:700px;width:248px;height:274px;background:#d4d0c8;border:1px solid;border-color:#808080 #fff #fff #808080"></div>
<div class="a" style="left:291px;top:701px;width:2px;height:272px;background:linear-gradient(90deg,#808080 50%,#fff 50%)"></div>
<div class="ir" style="top:701px"><b style="color:#800000">Action</b></div>
<div class="ir" style="top:717px"><b style="color:#800000">ActiveControl</b></div>
<div class="ir" style="top:733px"><b>Align</b><i style="left:104px">alNone</i></div>
<div class="ir" style="top:749px"><b>AlphaBlend</b><i style="left:102px">False</i></div>
<div class="ir" style="top:765px"><b style="max-width:72px;overflow:hidden">AlphaBlendValue</b><i>255</i></div>
<div class="ir" style="top:781px"><b>Anchors</b><i>[akLeft,akTop]</i></div>
<div class="ir" style="top:797px"><b>AutoScroll</b><i style="left:102px">False</i></div>
<div class="ir" style="top:813px"><b>AutoSize</b><i style="left:102px">False</i></div>
<div class="ir" style="top:829px"><b>BiDiMode</b><i>bdLeftToRight</i></div>
<div class="ir" style="top:845px"><b>BorderIcons</b><i style="font-weight:bold;letter-spacing:-.2px">[biSystemMenu,biMinimize,biMaximize]</i></div>
<div class="ir" style="top:861px"><b>BorderStyle</b><i style="font-weight:bold">bsSingle</i></div>
<div class="ir" style="top:877px"><b>BorderWidth</b><i>0</i></div>
<div class="ir" style="top:893px;border:0;border-top:1px solid #404040;border-bottom:1px solid #fff;border-left:1px solid #404040"><b style="left:12px">Caption</b></div>
<div class="a" style="left:293px;top:894px;width:144px;height:14px;background:#fff;font:bold 13px/14px 'Liberation Sans','Noto Sans CJK SC',sans-serif;padding-left:1px">晋升游戏控制器</div>
<div class="ir" style="top:909px"><b>ClientHeight</b><i style="font-weight:bold">374</i></div>
<div class="ir" style="top:925px"><b>ClientWidth</b><i style="font-weight:bold">534</i></div>
<div class="ir" style="top:941px"><b>Color</b><i style="left:104px;font-weight:bold">clBtnFace</i></div>
<div class="ir" style="top:957px;border:0"><b>Constraints</b><i>(0,0),(0,0)</i></div>
<svg style="left:208px;top:784px" width="9" height="9" viewBox="0 0 9 9"><rect x=".5" y=".5" width="8" height="8" fill="#fff" stroke="#000"/><path d="M2 4.500H7M4.500 2V7" stroke="#000"/></svg>
<svg style="left:208px;top:848px" width="9" height="9" viewBox="0 0 9 9"><rect x=".5" y=".5" width="8" height="8" fill="#fff" stroke="#000"/><path d="M2 4.500H7M4.500 2V7" stroke="#000"/></svg>
<svg style="left:208px;top:960px" width="9" height="9" viewBox="0 0 9 9"><rect x=".5" y=".5" width="8" height="8" fill="#fff" stroke="#000"/><path d="M2 4.500H7M4.500 2V7" stroke="#000"/></svg>
<svg style="left:295px;top:736px" width="11" height="11" viewBox="0 0 11 11"><rect x=".5" y=".5" width="10" height="10" fill="none" stroke="#000" stroke-dasharray="1 1"/><rect x="3.500" y="3.500" width="4" height="4" fill="#fff" stroke="#000"/></svg>
<div class="cb" style="left:295px;top:751px"></div><div class="cb" style="left:295px;top:799px"></div><div class="cb" style="left:295px;top:815px"></div>
<div class="a" style="left:295px;top:943px;width:12px;height:12px;background:#d4d0c8;border:1px solid #000"></div>
<div class="d" style="left:437px;top:701px;width:15px;height:272px"></div>
<div class="r" style="left:437px;top:702px;width:15px;height:15px"><svg style="left:1px;top:1px" width="12" height="12"><use href="#up"/></svg></div>
<div class="r" style="left:437px;top:717px;width:15px;height:68px"></div>
<div class="r" style="left:437px;top:957px;width:15px;height:15px"><svg style="left:1px;top:1px" width="12" height="12"><use href="#dn"/></svg></div>
<div class="l s" style="left:205px;top:976px;width:248px;height:18px;padding-left:2px">All shown</div>
<svg style="left:440px;top:981px" width="12" height="12" viewBox="0 0 12 12"><path d="M12 0L0 12M12 4L4 12M12 8L8 12" stroke="#808080"/></svg>

<!-- Form window -->
<div class="w" style="left:496px;top:268px;width:541px;height:400px"></div>
<svg style="left:499px;top:290px" width="535" height="375"><rect width="535" height="375" fill="url(#dots)"/></svg>
<div class="a" style="left:764px;top:296px;width:263px;height:23px;background:#d4d0c8"></div>
<div class="a" style="left:509px;top:296px;width:255px;height:6px;background:#d4d0c8"></div>
<div class="g" style="left:500px;top:272px;width:533px;height:18px"></div>
<svg style="left:503px;top:273px" width="17" height="17"><use href="#d7"/></svg>
<div class="ttl" style="left:519px;top:273px;font:bold 13px/16px 'Liberation Sans','Noto Sans CJK SC',sans-serif;letter-spacing:0">晋升游戏控制器</div>
<div class="r" style="left:982px;top:275px;width:16px;height:14px"><svg width="14" height="12"><use href="#mi"/></svg></div>
<div class="r" style="left:998px;top:275px;width:16px;height:14px"><svg width="14" height="12"><use href="#mx"/></svg></div>
<div class="r" style="left:1015px;top:275px;width:16px;height:14px"><svg width="14" height="12"><use href="#xx"/></svg></div>
<div class="a" style="left:508px;top:318px;width:519px;height:340px;background:#d4d0c8;border:1px solid;border-color:#fff #404040 #404040 #fff"></div>
<div class="tb" style="left:508px;top:302px;width:73px;height:17px;padding-left:7px;letter-spacing:0">服务器控制</div>
<div class="tb" style="left:582px;top:302px;width:60px;height:17px;letter-spacing:0">配置向导</div>
<div class="tb" style="left:642px;top:302px;width:58px;height:17px;letter-spacing:0">数据备份</div>
<div class="tb" style="left:701px;top:299px;width:63px;height:20px;letter-spacing:0;line-height:17px;z-index:1">相关信息</div>
<div class="a" style="left:508px;top:300px;width:9px;height:16px;background:#e06060;border:1px solid #808080;font:10px/14px 'Liberation Mono',monospace;text-align:center">0</div>
<div class="a" style="left:512px;top:322px;width:10px;height:16px;background:#808080;border:1px dotted #000;font:10px/14px 'Liberation Mono',monospace;text-align:center">3</div>
<div class="a" style="left:520px;top:338px;width:207px;height:56px;background:#fff"></div>
<svg style="left:521px;top:339px" width="52" height="54"><use href="#sl" width="52" height="54"/></svg>
<div class="t" style="left:589px;top:340px;height:36px;line-height:36px;font:900 31px/36px 'Noto Sans CJK SC',sans-serif;color:#1f55a8;transform:skewX(-14deg);letter-spacing:1px">晋升网络</div>
<div class="t" style="left:572px;top:375px;font:bold 18px/18px 'Liberation Mono',monospace;letter-spacing:2.100px;height:18px;-webkit-text-stroke:.6px currentColor">www.<span style="color:#e02818">51m2</span>.com</div>
<div class="a" style="left:737px;top:338px;width:270px;height:150px;border:1px solid #808080;box-shadow:inset 1px 1px #fff,1px 1px #fff"></div>
<div class="t" style="left:742px;top:331px;background:#d4d0c8;padding:0 1px;font-size:12px">版本信息</div>
<div class="a" style="left:737px;top:333px;width:11px;height:18px;background:#808080;border:1px dotted #000;font:10px/16px 'Liberation Mono',monospace;text-align:center">0</div>
<div class="a" style="left:521px;top:504px;width:320px;height:107px;border:1px solid #808080;box-shadow:inset 1px 1px #fff,1px 1px #fff"></div>
<div class="t" style="left:527px;top:497px;background:#d4d0c8;padding:0 1px;font-size:12px">版权公告</div>
<div class="a" style="left:521px;top:498px;width:10px;height:17px;background:#808080;border:1px dotted #000;font:10px/15px 'Liberation Mono',monospace;text-align:center">1</div>
<div class="a" style="left:530px;top:522px;font-size:12px;line-height:12.500px;height:52px;width:305px;overflow:hidden;white-space:nowrap">本计算机程序受中华人民共和国知识产权与版权法保护，<br>如未经授权而擅自复制或传播本程序（或其中任何部分），<br>将受到严厉的民事及刑事制裁，并在法律许可的范围内受<br>到最大程度的起诉。</div>
<svg style="left:570px;top:533px" width="25" height="24"><use href="#ck"/></svg>
<svg style="left:594px;top:524px" width="28" height="23"><use href="#ck"/></svg>
<svg style="left:642px;top:524px" width="28" height="23"><use href="#ck"/></svg>
<div class="t s" style="left:572px;top:553px;letter-spacing:-.5px">--StartTimer,BakTimer</div>
<div class="t s" style="left:556px;top:561px;background:#d4d0c8;letter-spacing:-.5px;height:14px">TimerCheck...</div>

<!-- Compiling -->
<div class="w" style="left:774px;top:343px;width:366px;height:203px"></div>
<div class="g" style="left:776px;top:345px;width:362px;height:18px"></div>
<div class="ttl" style="left:778px;top:347px;font-size:12px">Compiling</div>
<div class="a" style="left:785px;top:368px;width:345px;height:117px;border:1px solid;border-color:#fff #808080 #808080 #fff;box-shadow:inset 1px 1px #808080,inset -1px -1px #fff"></div>
<div class="l s" style="left:794px;top:376px;width:325px;height:19px;padding-left:4px;line-height:18px">Project:<span style="position:absolute;left:68px">C:\...\晋升源码\Source\Center\GameCenter.dpr</span></div>
<div class="l" style="left:794px;top:399px;width:325px;height:19px;padding-left:4px;font-weight:bold;letter-spacing:-.3px;line-height:18px">Done:<span style="position:absolute;left:68px">There are hints.</span><span style="position:absolute;left:178px">Time: 0s</span></div>
<div class="l s" style="left:794px;top:422px;width:160px;height:19px;padding-left:4px;line-height:18px">Current line:<span style="position:absolute;right:3px">0</span></div>
<div class="l s" style="left:959px;top:422px;width:160px;height:19px;padding-left:4px;line-height:18px">Total lines:<span style="position:absolute;right:3px">21329</span></div>
<div class="l s" style="left:794px;top:445px;width:105px;height:19px;padding-left:4px;line-height:18px">Hints:<span style="position:absolute;right:3px">2</span></div>
<div class="l s" style="left:904px;top:445px;width:105px;height:19px;padding-left:4px;line-height:18px">Warnings:<span style="position:absolute;right:3px">0</span></div>
<div class="l s" style="left:1014px;top:445px;width:105px;height:19px;padding-left:4px;line-height:18px">Errors:<span style="position:absolute;right:3px">0</span></div>
<div class="r" style="left:920px;top:493px;width:75px;height:25px;border:1px solid #000;box-shadow:inset 1px 1px #fff,inset -1px -1px #808080;text-align:center;line-height:22px;letter-spacing:-.3px">OK</div>
<div class="a" style="left:785px;top:524px;width:12px;height:12px;background:#fff;border:1px solid;border-color:#404040 #fff #fff #404040"></div>
<div class="t s" style="left:802px;top:522px;letter-spacing:-.55px"><u>A</u>utomatically close on successful compile</div>

<!-- Properties -->
<div class="w" style="left:1140px;top:465px;width:366px;height:465px"></div>
<div class="a" style="left:1143px;top:467px;width:360px;height:18px;background:linear-gradient(90deg,#0a246a,#a6caf0)"></div>
<svg style="left:1145px;top:468px" width="15" height="16"><use href="#sl" width="15" height="16"/></svg>
<div class="t" style="left:1163px;top:469px;color:#fff;font:bold 12px/16px 'Liberation Mono','Noto Sans CJK SC',monospace;letter-spacing:-.2px">GameCenter.exe 属性</div>
<div class="r" style="left:1486px;top:469px;width:17px;height:15px"><svg style="left:1px;top:0" width="13" height="13"><use href="#xx"/></svg></div>
<div class="a" style="left:1149px;top:512px;width:348px;height:383px;background:#d4d0c8;border:1px solid;border-color:#fff #404040 #404040 #fff"></div>
<div class="tb" style="left:1150px;top:492px;width:50px;height:21px;letter-spacing:0;text-align:left;padding-left:6px;line-height:18px;z-index:1;font-size:12px">常规</div>
<div class="tb" style="left:1201px;top:495px;width:46px;height:17px;letter-spacing:0;line-height:17px">兼容性</div>
<div class="tb" style="left:1247px;top:495px;width:48px;height:17px;letter-spacing:0;text-align:left;padding-left:5px;line-height:17px">安全</div>
<div class="tb" style="left:1295px;top:495px;width:60px;height:17px;letter-spacing:0;line-height:17px">详细信息</div>
<div class="tb" style="left:1355px;top:495px;width:72px;height:17px;letter-spacing:0;line-height:17px">以前的版本</div>
<svg style="left:1165px;top:526px" width="32" height="32"><use href="#sl" width="32" height="32"/></svg>
<div class="k" style="left:1237px;top:531px;width:246px;height:21px"></div>
<div class="t m" style="left:1240px;top:533px">GameCenter.exe</div>
<div class="h" style="left:1164px;top:562px;width:318px"></div>
<div class="lb" style="top:572px">文件类型:</div><div class="vl m" style="top:572px;letter-spacing:-.1px">应用程序 (.exe)</div>
<div class="lb" style="top:596px">描述:</div><div class="vl m" style="top:596px">http://www.51m2.com</div>
<div class="h" style="left:1164px;top:622px;width:318px"></div>
<div class="lb" style="top:632px">位置:</div><div class="vl m" style="top:632px">C:\Users</div><div class="a" style="left:1283px;top:632px;width:51px;height:15px;background:#000"></div><div class="t m" style="left:1335px;top:633px;letter-spacing:-.5px">\Desktop\晋升源码\Source\</div>
<div class="lb" style="top:656px">大小:</div><div class="vl m" style="top:656px">839 KB (859,136 字节)</div>
<div class="lb" style="top:680px">占用空间:</div><div class="vl m" style="top:680px">840 KB (860,160 字节)</div>
<div class="h" style="left:1164px;top:706px;width:318px"></div>
<div class="lb" style="top:716px">创建时间:</div><div class="vl m" style="top:716px;letter-spacing:-.55px">2020年3月11日，16:46:49</div>
<div class="lb" style="top:740px">修改时间:</div><div class="vl m" style="top:740px;letter-spacing:-.55px">2020年3月11日，16:54:28</div>
<div class="lb" style="top:764px">访问时间:</div><div class="vl m" style="top:764px;letter-spacing:-.55px">2020年3月11日，16:53:54</div>
<div class="h" style="left:1164px;top:790px;width:318px"></div>
<div class="lb" style="top:800px">属性:</div>
<div class="cb" style="left:1237px;top:804px;width:13px;height:13px"></div><div class="vl m" style="left:1254px;top:802px">只读(R)</div>
<div class="cb" style="left:1317px;top:804px;width:13px;height:13px"></div><div class="vl m" style="left:1334px;top:802px">隐藏(H)</div>
<div class="r m" style="left:1408px;top:799px;width:75px;height:21px;text-align:center;line-height:19px">高级(D)...</div>
<div class="r" style="left:1261px;top:901px;width:75px;height:21px;border:1px solid #000;box-shadow:inset 1px 1px #fff,inset -1px -1px #808080;text-align:center;line-height:19px">确定</div>
<div class="r" style="left:1342px;top:901px;width:75px;height:21px;text-align:center;line-height:19px">取消</div>
<div class="r" style="left:1423px;top:901px;width:75px;height:21px;text-align:center;line-height:19px;color:#808080;text-shadow:1px 1px #fff">应用(A)</div>

<!-- Guest taskbar -->
<div class="a" style="left:201px;top:1001px;width:1719px;height:29px;background:#d4d0c8;border-top:2px solid #fff;border-bottom:1px solid #808080"></div>
<div class="r" style="left:203px;top:1005px;width:47px;height:23px"></div>
<svg style="left:206px;top:1008px" width="16" height="16" viewBox="0 0 16 16"><path d="M1 3L7 1V7H1Z" fill="#e85020"/><path d="M8 1L15 2V7H8Z" fill="#70b830"/><path d="M1 8H7V14L1 13Z" fill="#3090e0"/><path d="M8 8H15V14L8 15Z" fill="#f8c020"/></svg>
<div class="t" style="left:222px;top:1008px;font-size:13px">开始</div>
<div class="a" style="left:268px;top:1009px;width:14px;height:14px;border-radius:50%;background:conic-gradient(#e04030 0 33%,#f8c820 0 66%,#30a040 0)"></div>
<div class="a" style="left:272px;top:1013px;width:6px;height:6px;border-radius:50%;background:#3878e0;box-shadow:0 0 0 1.500px #fff"></div>
<div class="r" style="left:293px;top:1005px;width:160px;height:23px"></div>
<svg style="left:298px;top:1006px" width="20" height="20"><use href="#d7"/></svg>
<div class="t m" style="left:317px;top:1009px">Delphi 7</div>
<div class="r" style="left:455px;top:1005px;width:159px;height:23px"></div>
<svg style="left:459px;top:1007px" width="16" height="19" viewBox="0 0 16 19"><path d="M2 1H8V18H2Z" fill="#f0dc80" stroke="#b0a040" stroke-width=".6"/><path d="M8 2L14 4V17L8 18Z" fill="#e8c840"/></svg>
<div class="t m" style="left:478px;top:1009px">Center</div>
<div class="d" style="left:615px;top:1005px;width:160px;height:23px;border:1px solid;border-color:#404040 #fff #fff #404040"></div>
<svg style="left:619px;top:1007px" width="17" height="19"><use href="#sl" width="17" height="19"/></svg>
<div class="t" style="left:638px;top:1009px;font:bold 11px/16px 'Liberation Mono','Noto Sans CJK SC',monospace;letter-spacing:-.4px;background:#fff">GameCenter.exe 属性</div>
<svg style="left:1690px;top:1002px" width="226" height="26" viewBox="0 0 226 26">
<rect x="4" y="6" width="16" height="15" fill="#fff" stroke="#c04040" stroke-width="2"/><rect x="4" y="5" width="16" height="4" fill="#d06060"/><text x="7" y="19" font-size="10" font-weight="bold" font-family="Noto Sans CJK SC">五</text>
<path d="M25 3V24" stroke="#808080"/><path d="M26 3V24" stroke="#fff"/>
<circle cx="40" cy="13" r="7" fill="#1038b0" stroke="#404858" stroke-width="1.500"/><text x="37" y="17" font-size="11" font-weight="bold" fill="#fff" font-family="Liberation Sans">?</text>
<path d="M53 3V24" stroke="#808080"/><path d="M54 3V24" stroke="#fff"/>
<path d="M60 8V5H67V9H64M60 8H64V11H60Z" fill="none" stroke="#000"/><path d="M60 18H66L63 21Z"/>
<path d="M71 3.500H226V23.500H71Z" fill="#d4d0c8" stroke="#808080"/><path d="M226 4V24H71" stroke="#fff" fill="none"/>
<path d="M78 9L81 6L84 9M78 14L81 11L84 14" fill="none" stroke="#000" stroke-width="1.500"/>
<path d="M95 4V21" stroke="#555"/><path d="M96 5H106V13H96Z" fill="#f0f0f0" stroke="#888"/><circle cx="106" cy="17" r="4.500" fill="#e03030"/><path d="M104 15L108 19M108 15L104 19" stroke="#fff"/>
<rect x="127" y="6" width="10" height="11" fill="#a0a0a0" stroke="#333"/><rect x="120" y="4" width="5" height="13" fill="#fff" stroke="#000"/><path d="M123 17H127V20H123Z" fill="#888"/>
<path d="M147 9H150L154 5V20L150 16H147Z" fill="#c0c0c0" stroke="#666"/><path d="M157 8Q160 12 157 16M160 6Q164 12 160 18" fill="none" stroke="#999"/>
<rect x="210" y="5" width="15" height="13" fill="#2060b0"/><rect x="210" y="14" width="15" height="4" fill="#103060"/>
</svg>
<div class="t m" style="left:1862px;top:1008px;font-size:11.500px;letter-spacing:-.3px">16:55</div>

<!-- VMware status -->
<div class="a" style="left:0;top:1030px;width:1920px;height:20px;background:#f0f0f0"></div>
<div class="t" style="left:1px;top:1032px;font-size:12px">要将输入定向到该虚拟机，请将鼠标指针移入其中或按 Ctrl+G。</div>
<svg style="left:1740px;top:1031px" width="170" height="19" viewBox="0 0 170 19" fill="none" stroke="#54606c">
<path d="M5 4H17L20 12V17H3V12ZM3 12H20"/><circle cx="18" cy="16" r="2.500" fill="#70b830" stroke="none"/>
<circle cx="34" cy="10" r="7" stroke="#a0a4a8"/><circle cx="34" cy="10" r="2" stroke="#a0a4a8"/>
<path d="M49 4H59V13H49ZM54 8H64V17H54" /><circle cx="60" cy="16" r="2.500" fill="#70b830" stroke="none"/>
<path d="M73 8H85V14H73ZM76 8V3H82V8M76 12H82V17H76Z" stroke="#a0a4a8"/>
<path d="M92 8H95L99 4V16L95 12H92Z"/><path d="M102 7V11"/><circle cx="101" cy="16" r="2.500" fill="#70b830" stroke="none"/>
<circle cx="118" cy="10" r="6" stroke="#a0a4a8"/><circle cx="118" cy="10" r="2.500" stroke="#a0a4a8"/>
<path d="M133 2V18" stroke="#b0b2b4"/>
<path d="M143 4H157V13L152 17H143Z"/><path d="M157 13H152V17"/>
</svg>
</body></html>
